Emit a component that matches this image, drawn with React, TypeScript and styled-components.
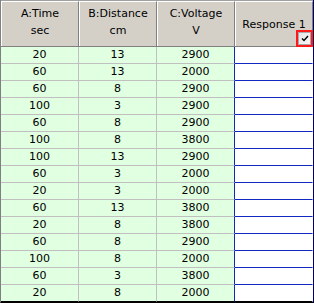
import styled, { createGlobalStyle } from 'styled-components';

const GlobalStyle = createGlobalStyle`
  html, body {
    margin: 0;
    padding: 0;
    background: #ffffff;
  }
`;

const rows: [string, string, string][] = [
  ['20', '13', '2900'],
  ['60', '13', '2000'],
  ['60', '8', '2900'],
  ['100', '3', '2900'],
  ['60', '8', '2900'],
  ['100', '8', '3800'],
  ['100', '13', '2900'],
  ['60', '3', '2000'],
  ['20', '3', '2000'],
  ['60', '13', '3800'],
  ['20', '8', '3800'],
  ['60', '8', '2900'],
  ['100', '8', '2000'],
  ['60', '3', '3800'],
  ['20', '8', '2000'],
];

const Grid = styled.div`
  width: 314px;
  box-sizing: border-box;
  border-left: 1px solid #808080;
  border-right: 1px solid #000060;
  border-bottom: 1px solid #000000;
  font-family: 'DejaVu Sans', Verdana, sans-serif;
  font-size: 11px;
  color: #000000;
`;

const HeaderRow = styled.div`
  display: grid;
  grid-template-columns: repeat(4, 78px);
  height: 47px;
  background: #d4d0c8;
  border-top: 1px solid #a0a0a0;
  border-bottom: 1px solid #808080;
  box-sizing: border-box;
`;

const HeaderCell = styled.div`
  position: relative;
  display: flex;
  flex-direction: column;
  align-items: center;
  justify-content: center;
  border-left: 1px solid #ffffff;
  border-top: 1px solid #ffffff;
  border-right: 1px solid #808080;
  line-height: 17px;
  padding-bottom: 4px;
  box-sizing: border-box;
`;

const ResponseLabel = styled.span`
  margin-top: 5px;
`;

const CheckFrame = styled.div`
  position: absolute;
  right: -1px;
  bottom: -1px;
  width: 17px;
  height: 17px;
  box-sizing: border-box;
  border: 2px solid #ff1a1a;
  display: flex;
  align-items: center;
  justify-content: center;
  background: #ffffff;
`;

const CheckBox = styled.div`
  width: 13px;
  height: 13px;
  box-sizing: border-box;
  border: 1px solid #a8a8b0;
  background: linear-gradient(135deg, #e4e4e4, #f8f8f8);
  display: flex;
  align-items: center;
  justify-content: center;
`;

const Row = styled.div`
  display: grid;
  grid-template-columns: repeat(4, 78px);
  height: 17px;
`;

const Cell = styled.div<{ $response?: boolean; $last?: boolean; $beforeResponse?: boolean }>`
  display: flex;
  align-items: center;
  justify-content: center;
  box-sizing: border-box;
  background: ${({ $response }) => ($response ? '#ffffff' : '#e1ffe1')};
  border-right: 1px solid
    ${({ $beforeResponse, $response }) =>
      $beforeResponse ? '#1028c0' : $response ? 'transparent' : '#c0c0c0'};
  border-bottom: 1px solid
    ${({ $last, $response }) => ($last ? '#000000' : $response ? '#1028c0' : '#c0c0c0')};
  line-height: 16px;
`;

export default function App() {
  return (
    <>
      <GlobalStyle />
      <Grid>
        <HeaderRow>
          <HeaderCell>
            <span>A:Time</span>
            <span>sec</span>
          </HeaderCell>
          <HeaderCell>
            <span>B:Distance</span>
            <span>cm</span>
          </HeaderCell>
          <HeaderCell>
            <span>C:Voltage</span>
            <span>V</span>
          </HeaderCell>
          <HeaderCell>
            <ResponseLabel>Response 1</ResponseLabel>
            <CheckFrame>
              <CheckBox>
                <svg width="8" height="7" viewBox="0 0 8 7">
                  <path d="M1 3.5 L3 5.5 L7 1" fill="none" stroke="#000" strokeWidth="1.4" />
                </svg>
              </CheckBox>
            </CheckFrame>
          </HeaderCell>
        </HeaderRow>
        {rows.map((r, i) => {
          const last = i === rows.length - 1;
          return (
            <Row key={i}>
              <Cell $last={last}>{r[0]}</Cell>
              <Cell $last={last}>{r[1]}</Cell>
              <Cell $last={last} $beforeResponse>
                {r[2]}
              </Cell>
              <Cell $last={last} $response />
            </Row>
          );
        })}
      </Grid>
    </>
  );
}
